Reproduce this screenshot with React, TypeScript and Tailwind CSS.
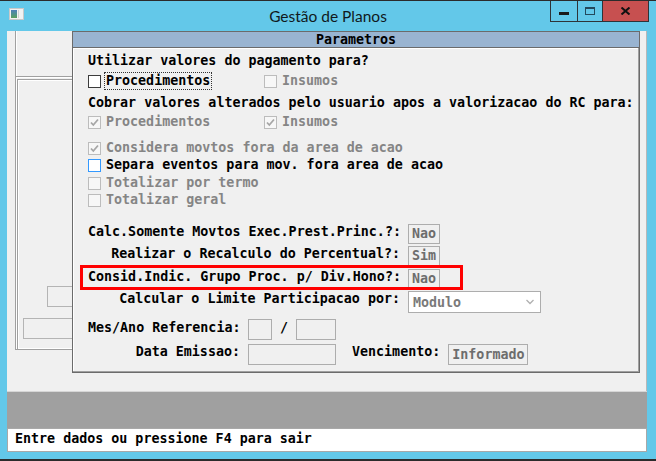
import React from "react";

const mono = "font-['DejaVu_Sans_Mono','Liberation_Mono',monospace] font-bold text-[13.33px] leading-[16px] whitespace-pre";

type BoxState = "off" | "focus" | "offDis" | "onDis";

function CheckBox({ state }: { state: BoxState }) {
  const look =
    state === "off"
      ? "border-[#3c3c3c] bg-white"
      : state === "focus"
      ? "border-[#3399ff] bg-white"
      : "border-[#bcbcbc] bg-[#f7f7f7]";
  return (
    <span className={`flex h-[13px] w-[13px] shrink-0 items-center justify-center border ${look}`}>
      {state === "onDis" && (
        <svg width="11" height="11" viewBox="0 0 11 11">
          <path d="M2 5.5 L4.3 8 L9 2.5" fill="none" stroke="#a6a6a6" strokeWidth="1.8" />
        </svg>
      )}
    </span>
  );
}

function Option({
  state,
  label,
  focused = false,
}: {
  state: BoxState;
  label: string;
  focused?: boolean;
}) {
  const dim = state === "offDis" || state === "onDis";
  return (
    <div className="flex items-center">
      <CheckBox state={state} />
      <span
        className={`ml-[3px] border px-[1px] ${
          focused ? "border-dotted border-[#333333]" : "border-transparent"
        } ${dim ? "text-[#858585]" : "text-black"}`}
      >
        {label}
      </span>
    </div>
  );
}

function Field({ w, text, white = false }: { w: string; text: string; white?: boolean }) {
  return (
    <div
      className={`${w} h-[20px] shrink-0 border border-[#adadad] pl-[3px] leading-[18px] text-[#6d6d6d] ${
        white ? "bg-white" : ""
      }`}
    >
      {text}
    </div>
  );
}

function TitleBar() {
  return (
    <div className="grid h-[30px] grid-cols-[1fr_auto_1fr]">
      <div className="flex items-start">
        {/* application icon */}
        <div className="ml-[9px] mt-[7px] flex h-[12px] w-[15px] border border-[#c9c9c9] bg-[#f2f2f2] p-[1px]">
          <div className="h-full w-[6px] bg-gradient-to-b from-[#4f7fb8] to-[#5aa05a]" />
          <div className="ml-[1px] h-full w-[1px] bg-[#d0d0d0]" />
        </div>
      </div>
      <div className="pt-[5px] font-['Lato','Noto_Sans',sans-serif] text-[15.5px] leading-[20px] text-[#101820]">
        Gestão de Planos
      </div>
      <div className="flex items-start justify-end">
        <div className="mr-[7px] flex h-[21px] border-x border-b border-[#2e3338]">
          <div className="flex w-[27px] items-center justify-center border-r border-[#2e3338]">
            <div className="mt-[4px] h-[3px] w-[10px] bg-[#1a1a1a]" />
          </div>
          <div className="flex w-[25px] items-center justify-center border-r border-[#2e3338]">
            <div className="mb-[1px] h-[8px] w-[10px] border border-t-2 border-[#23495c]" />
          </div>
          <div className="flex w-[45px] items-center justify-center bg-[#c75050]">
            <svg width="11" height="8" viewBox="0 0 11 8">
              <path d="M1.5 0.5 L9.5 7.5 M9.5 0.5 L1.5 7.5" stroke="#111111" strokeWidth="2" />
            </svg>
          </div>
        </div>
      </div>
    </div>
  );
}

function BackPanel() {
  return (
    <div className="ml-[8px] flex h-[319px] w-[57px] flex-col border-b border-l border-[#a0a0a0] shadow-[inset_1px_-1px_0_#ffffff]">
      <div className="h-[46px] border-b border-[#a0a0a0] shadow-[0_1px_0_#ffffff]" />
      <div className="ml-[1px] mt-[2px] flex flex-1 flex-col items-end border-l border-t border-[#a0a0a0] shadow-[inset_1px_1px_0_#ffffff]">
        <div className="mt-[206px] h-[21px] w-[25px] border-y border-l border-[#b4b4b4]" />
        <div className="mt-[11px] h-[21px] w-[49px] border-y border-l border-[#b4b4b4]" />
      </div>
    </div>
  );
}

function Parametros() {
  return (
    <div className={`flex h-[342px] w-[568px] shrink-0 flex-col border border-[#6b6b6b] ${mono}`}>
      <div className="h-[16px] border-b border-[#6b6b6b] bg-[#99b4d1] text-center leading-[15px] text-black">
        Parametros
      </div>
      <div className="flex flex-1 flex-col border-r border-b border-r-[#a0a0a0] border-b-[#a0a0a0] pl-[15px] shadow-[inset_1px_1px_0_#ffffff]">
        <div className="mt-[4px] flex h-[18px] items-center text-black">
          Utilizar valores do pagamento para?
        </div>
        <div className="mt-[2px] grid h-[18px] grid-cols-[176px_auto] items-center">
          <Option state="off" label="Procedimentos" focused />
          <Option state="offDis" label="Insumos" />
        </div>
        <div className="mt-[4px] flex h-[18px] items-center text-black">
          Cobrar valores alterados pelo usuario apos a valorizacao do RC para:
        </div>
        <div className="mt-[1px] grid h-[18px] grid-cols-[176px_auto] items-center">
          <Option state="onDis" label="Procedimentos" />
          <Option state="onDis" label="Insumos" />
        </div>
        <div className="mt-[8px] flex h-[18px] items-center">
          <Option state="onDis" label="Considera movtos fora da area de acao" />
        </div>
        <div className="flex h-[16px] items-center">
          <Option state="focus" label="Separa eventos para mov. fora area de acao" />
        </div>
        <div className="mt-[2px] flex h-[16px] items-center">
          <Option state="offDis" label="Totalizar por termo" />
        </div>
        <div className="mt-[1px] flex h-[16px] items-center">
          <Option state="offDis" label="Totalizar geral" />
        </div>

        <div className="mt-[16px] flex h-[20px] items-start">
          <div className="w-[312px] text-right">Calc.Somente Movtos Exec.Prest.Princ.?:</div>
          <div className="ml-[8px]">
            <Field w="w-[32px]" text="Nao" />
          </div>
        </div>
        <div className="mt-[2px] flex h-[20px] items-start">
          <div className="w-[312px] text-right">Realizar o Recalculo do Percentual?:</div>
          <div className="ml-[8px]">
            <Field w="w-[32px]" text="Sim" />
          </div>
        </div>
        <div className="relative mt-[3px] flex h-[20px] items-start">
          <div className="w-[312px] text-right">Consid.Indic. Grupo Proc. p/ Div.Hono?:</div>
          <div className="ml-[8px]">
            <Field w="w-[32px]" text="Nao" />
          </div>
          <span className="absolute left-[-8px] top-[-4px] h-[25px] w-[383px] border-[3px] border-[#ff0000]" />
        </div>
        <div className="mt-[2px] flex h-[22px] items-start">
          <div className="w-[312px] text-right">Calcular o Limite Participacao por:</div>
          <div className="ml-[8px] flex h-[22px] w-[133px] items-center justify-between border border-[#adadad] bg-white pl-[4px] pr-[6px] text-[#7a7a7a]">
            <span className="mt-[1px]">Modulo</span>
            <svg width="8" height="6" viewBox="0 0 8 6">
              <path d="M0.5 1 L4 4.5 L7.5 1" fill="none" stroke="#b0b0b0" strokeWidth="1.3" />
            </svg>
          </div>
        </div>
        <div className="mt-[6px] flex h-[21px] items-start">
          <div className="mt-[1px] w-[152px] text-right">Mes/Ano Referencia:</div>
          <div className="ml-[8px] h-[21px] w-[24px] border border-[#adadad]" />
          <div className="mt-[1px] ml-[8px] w-[8px]">/</div>
          <div className="ml-[8px] h-[21px] w-[40px] border border-[#adadad]" />
        </div>
        <div className="mt-[4px] flex h-[21px] items-start">
          <div className="w-[152px] text-right">Data Emissao:</div>
          <div className="ml-[8px] h-[21px] w-[88px] border border-[#adadad]" />
          <div className="ml-[16px]">Vencimento:</div>
          <div className="ml-[8px]">
            <div className="h-[21px] w-[80px] border border-[#adadad] pl-[3px] leading-[19px] text-[#6d6d6d]">
              Informado
            </div>
          </div>
        </div>
      </div>
    </div>
  );
}

export default function App() {
  return (
    <div className="flex h-[461px] w-[656px] flex-col border-t border-b-2 border-[#2b2b2b] bg-[#63c8e9]">
      <TitleBar />
      <div className="ml-[7px] flex h-[421px] w-[640px] flex-col bg-[#f0f0f0]">
        <div className="flex h-[360px] border-r border-[#b8b8b8]">
          <BackPanel />
          <Parametros />
        </div>
        <div className="h-[37px] border-t border-[#d6d6d6] bg-[#a0a0a0]" />
        <div
          className={`h-[24px] border border-[#a8a8a8] bg-white pl-[7px] pt-[2px] text-black ${mono}`}
        >
          Entre dados ou pressione F4 para sair
        </div>
      </div>
    </div>
  );
}
